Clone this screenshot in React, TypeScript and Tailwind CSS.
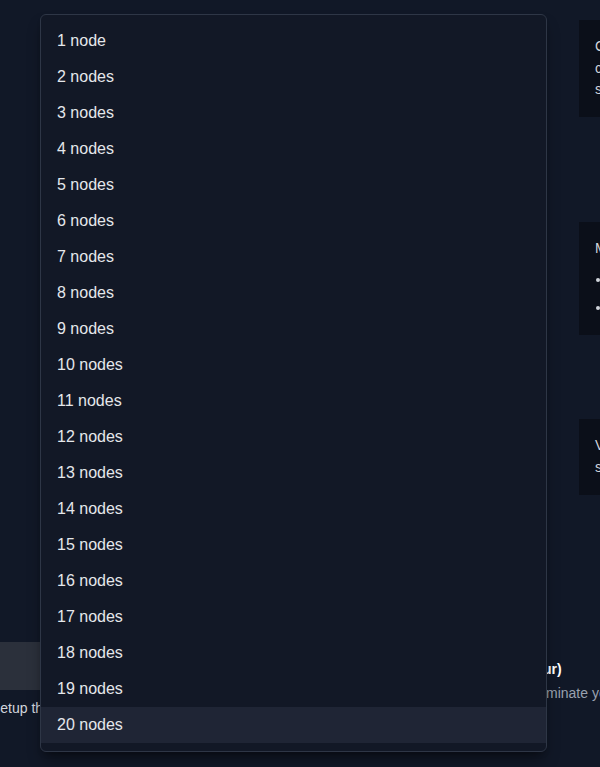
import React from "react";

const nodeCounts = Array.from({ length: 20 }, (_, i) => i + 1);

export default function App() {
  return (
    <div className="relative w-[600px] h-[767px] overflow-hidden bg-[#111827] font-['Liberation_Sans',Arial,sans-serif] text-gray-200">
      {/* Page behind the open select */}
      <div className="flex pt-5">
        <div className="w-[579px] shrink-0" />
        <div className="flex flex-col w-[300px] shrink-0 text-sm">
          <div className="bg-[#0b0f19] h-[97px] px-4 pt-[16px] leading-[21.5px] text-gray-300">
            <p>Choose how many nodes the</p>
            <p>cluster should start with. You can</p>
            <p>scale it later from the console.</p>
          </div>
          <div className="bg-[#0b0f19] h-[113px] mt-[105px] px-4 pt-[16px] text-gray-300">
            <p className="leading-[20px]">More nodes give you:</p>
            <ul className="mt-[11px] space-y-[8px] list-disc pl-4 leading-[20px]">
              <li>Higher throughput</li>
              <li>Better fault tolerance</li>
            </ul>
          </div>
          <div className="bg-[#0b0f19] h-[76px] mt-[84px] px-4 pt-[15px] leading-[22px] text-gray-300">
            <p>Very large clusters may need a</p>
            <p>short review before going live.</p>
          </div>
        </div>
      </div>

      <div className="flex mt-[147px]">
        <div className="w-[480px] shrink-0 -ml-[9px]">
          <div className="h-12 bg-[#2b303b] rounded-md" />
          <p className="mt-[8px] text-sm text-gray-300">Setup the cluster in one click</p>
        </div>
        <div className="ml-[-79px] mt-[17px] text-sm">
          <p className="font-bold text-white leading-5">Estimated cost (per hour)</p>
          <p className="mt-[4px] -ml-[4px] text-gray-400 leading-5 whitespace-nowrap">Scale clusters down to eliminate your idle costs</p>
        </div>
      </div>

      {/* Open dropdown */}
      <div className="absolute left-[40px] top-[14px] w-[507px] rounded-md border border-[#2e3646] bg-[#121826] py-2 shadow-lg shadow-black/40">
        {nodeCounts.map((n) => (
          <div
            key={n}
            className={`h-9 px-4 flex items-center text-base text-gray-200 ${n === 20 ? "bg-[#1f2535]" : ""}`}
          >
            {n === 1 ? "1 node" : `${n} nodes`}
          </div>
        ))}
      </div>
    </div>
  );
}
